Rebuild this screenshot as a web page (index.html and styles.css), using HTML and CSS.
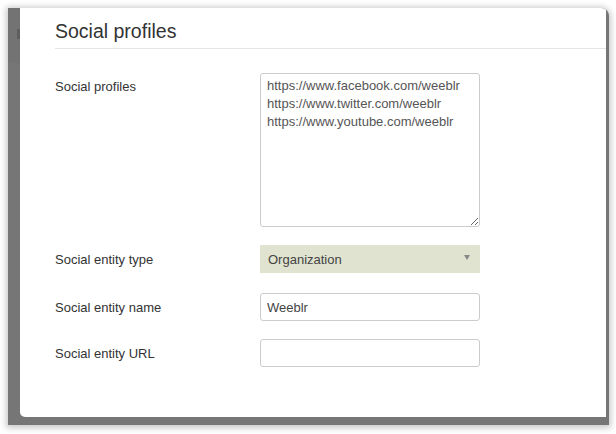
FILE: index.html
```html
<!DOCTYPE html>
<html>
<head>
<meta charset="utf-8">
<link rel="stylesheet" href="styles.css">
</head>
<body>
<div class="screen">
  <div class="backdrop-top"><span class="mark"></span></div>
  <div class="modal">
    <div class="modal-header"><h3 class="title">Social profiles</h3></div>
    <form class="form">
      <div class="row row-top">
        <label class="label label-top">Social profiles</label>
        <textarea class="textarea">https://www.facebook.com/weeblr
https://www.twitter.com/weeblr
https://www.youtube.com/weeblr</textarea>
      </div>
      <div class="row row-select">
        <label class="label">Social entity type</label>
        <div class="select"><span>Organization</span><b class="caret"></b></div>
      </div>
      <div class="row row-name">
        <label class="label">Social entity name</label>
        <input class="input" type="text" value="Weeblr">
      </div>
      <div class="row row-url">
        <label class="label">Social entity URL</label>
        <input class="input" type="text" value="">
      </div>
    </form>
  </div>
</div>
</body>
</html>
```
FILE: styles.css
```css
html, body {
  margin: 0;
  padding: 0;
  background: #ffffff;
}
body {
  padding: 8px;
  font-family: "Liberation Sans", Arial, sans-serif;
}
.screen {
  position: relative;
  width: 601px;
  height: 417px;
  box-sizing: border-box;
  padding: 0 3px 8px 12px;
  background: #767676;
  border-top-right-radius: 8px;
  box-shadow: 0 1px 6px 2px rgba(0, 0, 0, 0.22);
  overflow: hidden;
}
.backdrop-top {
  position: absolute;
  left: 0;
  top: 0;
  width: 12px;
  height: 55px;
  background: #737373;
}
.mark {
  position: absolute;
  left: 9px;
  top: 21px;
  width: 3px;
  height: 10px;
  background: #5e5e5e;
}
.modal {
  position: relative;
  height: 100%;
  background: #ffffff;
  border-bottom-left-radius: 5px;
}
.modal-header {
  margin-left: 35px;
  padding: 12px 0 6px;
  border-bottom: 1px solid #e5e5e5;
}
.title {
  margin: 0;
  font-size: 19.5px;
  line-height: 22px;
  font-weight: normal;
  color: #333333;
}
.form {
  margin: 0;
  padding: 24px 0 0 35px;
}
.row {
  display: flex;
  align-items: center;
}
.row-top {
  align-items: flex-start;
}
.row-select { margin-top: 18px; }
.row-name { margin-top: 20px; }
.row-url { margin-top: 18px; }
.label {
  width: 205px;
  font-size: 13px;
  line-height: 18px;
  color: #333333;
  padding-top: 1px;
}
.label-top {
  padding-top: 5px;
}
.textarea {
  width: 220px;
  height: 154px;
  box-sizing: border-box;
  margin: 0;
  padding: 3px 6px;
  border: 1px solid #cccccc;
  border-radius: 3px;
  font-family: "Liberation Sans", Arial, sans-serif;
  font-size: 13px;
  line-height: 18px;
  color: #555555;
  resize: both;
  background: #fff;
}
.select {
  position: relative;
  width: 220px;
  height: 28px;
  box-sizing: border-box;
  padding: 0 8px;
  display: flex;
  align-items: center;
  background: #dfe3cf;
  font-size: 13px;
  color: #444444;
}
.caret {
  position: absolute;
  right: 10px;
  top: 10px;
  width: 0;
  height: 0;
  border-left: 3px solid transparent;
  border-right: 3px solid transparent;
  border-top: 5px solid #888888;
}
.input {
  width: 220px;
  height: 28px;
  box-sizing: border-box;
  margin: 0;
  padding: 0 6px;
  border: 1px solid #cccccc;
  border-radius: 3px;
  font-family: "Liberation Sans", Arial, sans-serif;
  font-size: 13px;
  color: #444444;
  background: #fff;
  outline: none;
}
```
